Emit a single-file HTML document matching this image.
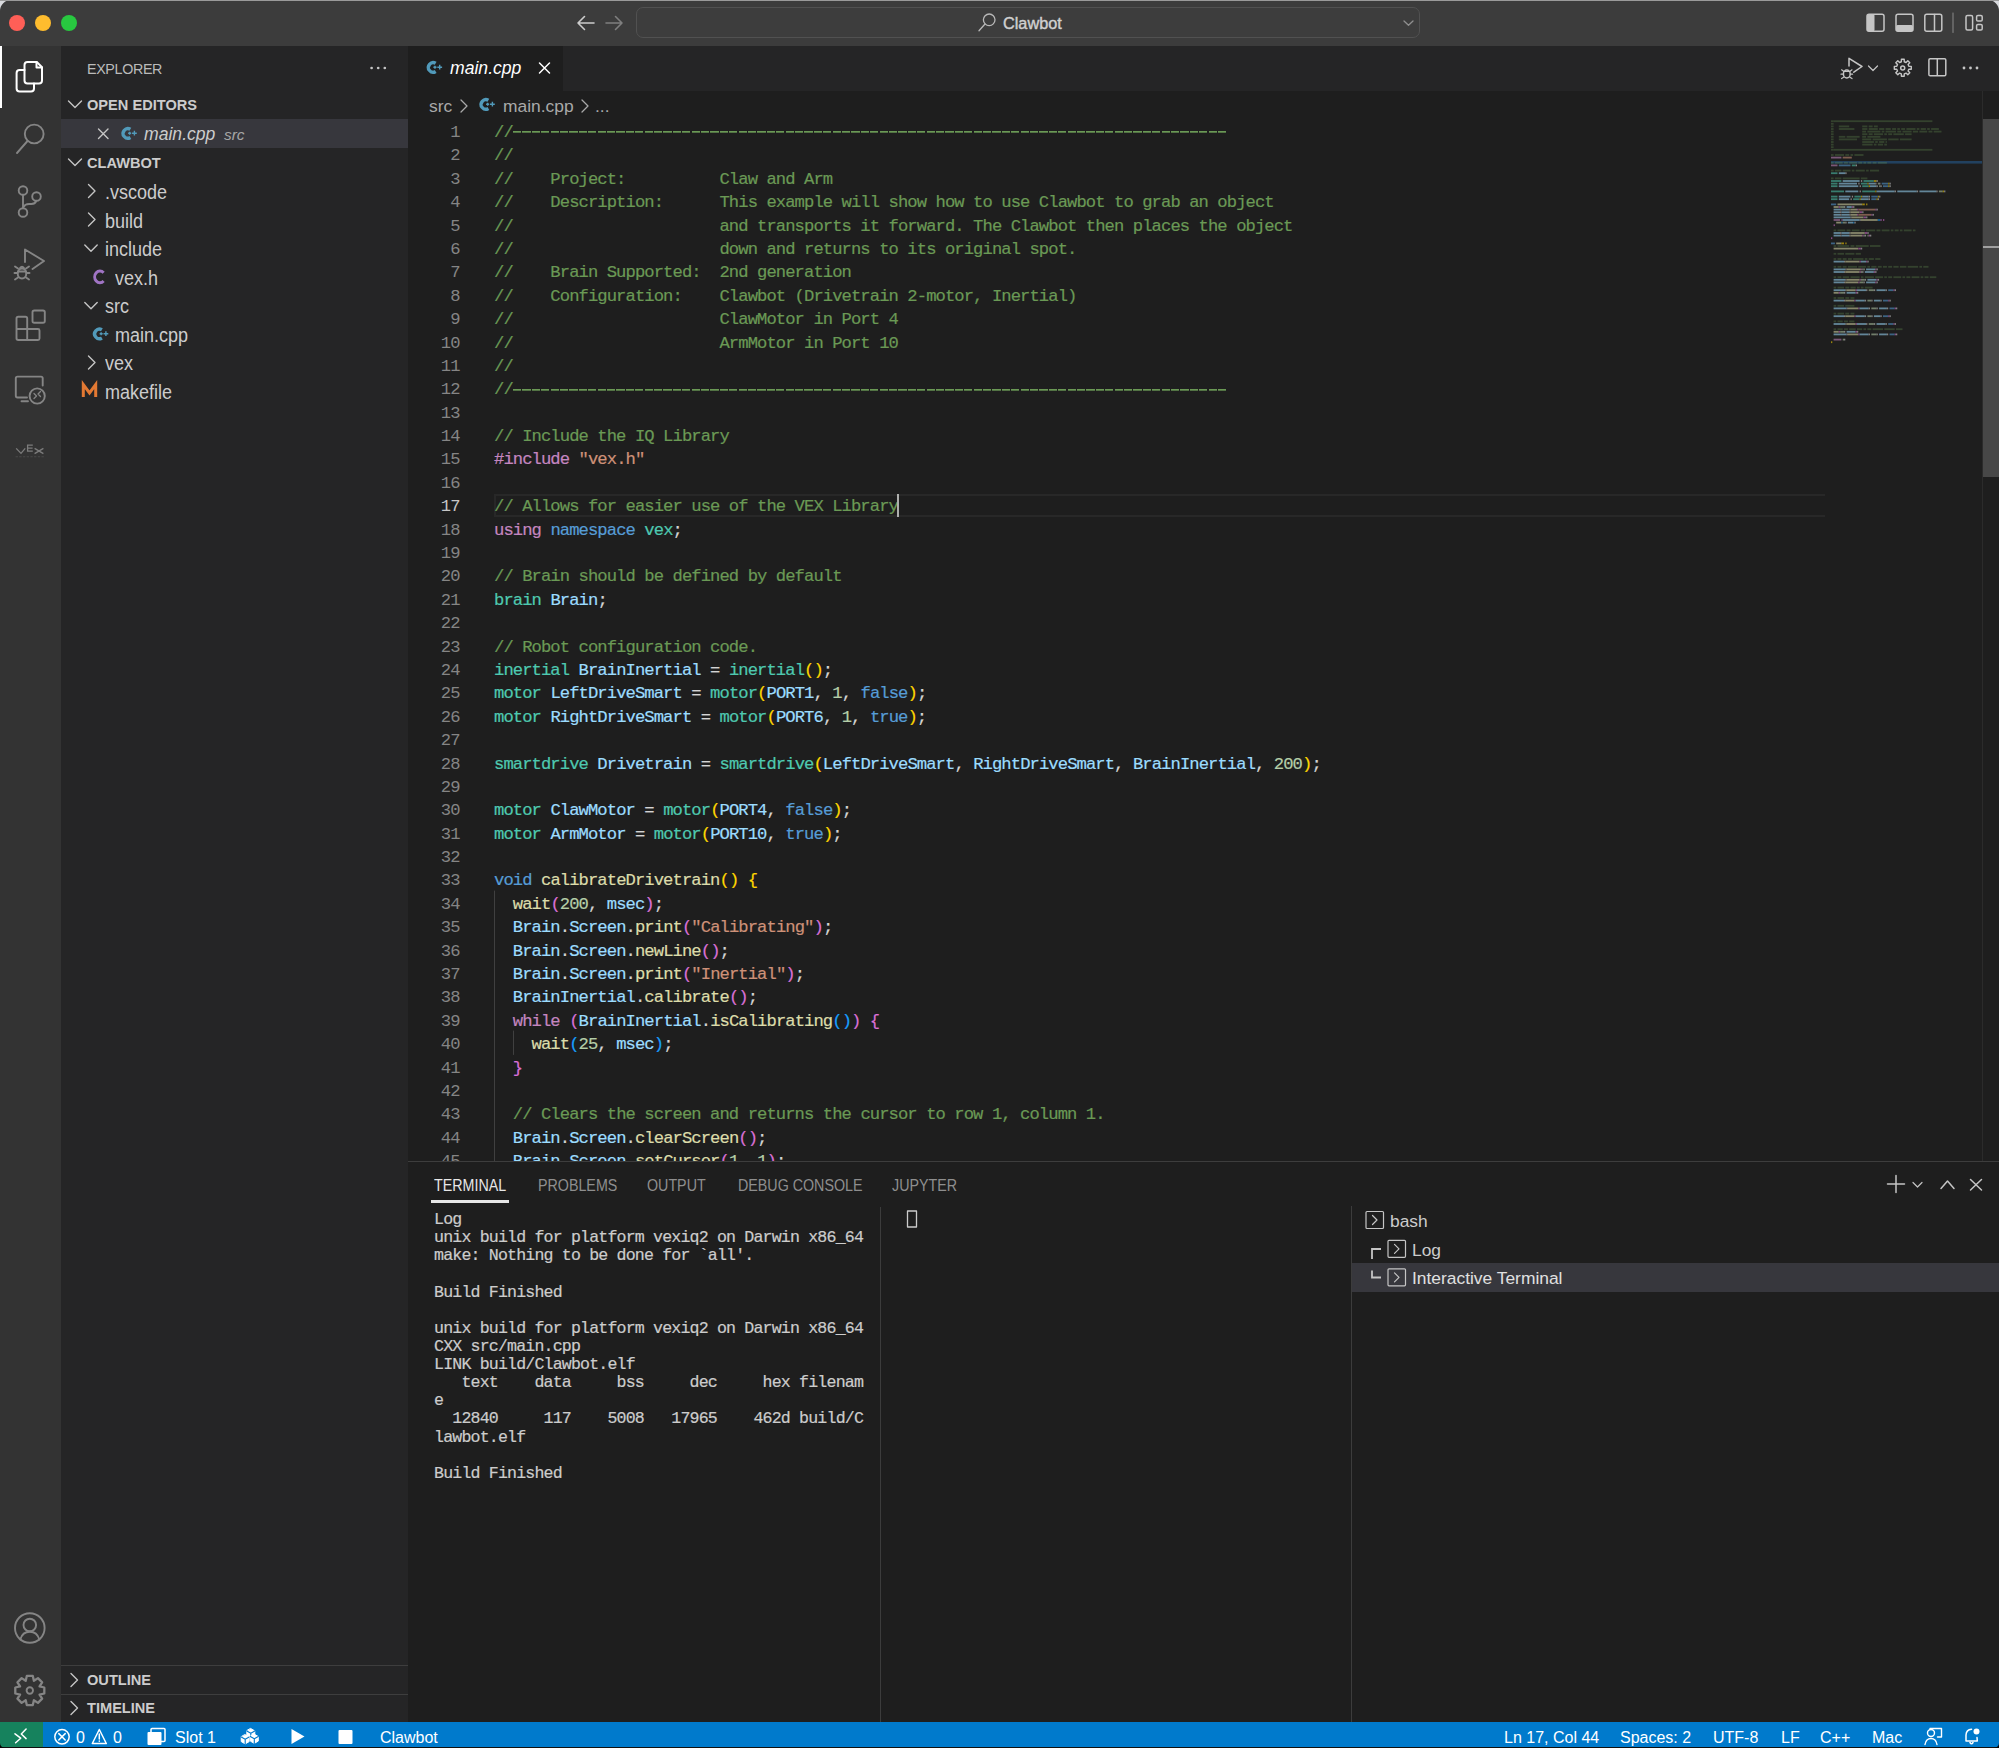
<!DOCTYPE html>
<html><head><meta charset="utf-8"><title>VS Code - Clawbot</title>
<style>
html,body{margin:0;padding:0;}
body{width:1999px;height:1748px;overflow:hidden;background:#1e1e1e;position:relative;font-family:"Liberation Sans",sans-serif;}
.a{position:absolute;}
.title{position:absolute;left:0;top:0;width:1999px;height:46px;background:#3c3c3c;border-top:1px solid #8c8c8c;box-sizing:border-box;}
.tl-dot{position:absolute;width:16px;height:16px;border-radius:50%;top:15px;}
.search{position:absolute;left:636px;top:7px;width:784px;height:31px;border:1.5px solid #515151;border-radius:7px;background:#3d3d3d;box-sizing:border-box;}
.act{position:absolute;left:0;top:46px;width:61px;height:1676px;background:#333333;}
.side{position:absolute;left:61px;top:46px;width:347px;height:1676px;background:#252526;}
.row{position:absolute;height:29px;line-height:29px;font-size:18.2px;color:#cccccc;white-space:pre;}
.hdr{position:absolute;font-size:14.6px;font-weight:bold;color:#cccccc;line-height:29px;white-space:pre;}
.tabs{position:absolute;left:408px;top:46px;width:1591px;height:45px;background:#252526;}
.tab{position:absolute;left:408px;top:46px;width:155px;height:45px;background:#1e1e1e;}
.editor{position:absolute;left:408px;top:91px;width:1574px;height:1070px;overflow:hidden;background:#1e1e1e;}
.ln{position:absolute;left:86px;height:23.39px;line-height:23.39px;font-family:"Liberation Mono",monospace;font-size:17.2px;letter-spacing:-0.92px;white-space:pre;color:#d4d4d4;-webkit-text-stroke:0.2px;}
.num{position:absolute;left:0;width:51.6px;text-align:right;height:23.39px;line-height:23.39px;font-family:"Liberation Mono",monospace;font-size:17.2px;letter-spacing:-0.92px;color:#858585;}
.num.cur{color:#c6c6c6;}
.c{color:#6a9955}.k{color:#c586c0}.s{color:#ce9178}.b{color:#569cd6}.y{color:#4ec9b0}.v{color:#9cdcfe}.f{color:#dcdcaa}.n{color:#b5cea8}.g{color:#ffd700}.p{color:#da70d6}.u{color:#179fff}.t{color:#d4d4d4}
.panel{position:absolute;left:408px;top:1161px;width:1591px;height:561px;background:#1e1e1e;border-top:1px solid #3d3d3d;box-sizing:border-box;}
.ptab{position:absolute;top:1176px;font-size:15.6px;line-height:20px;color:#8e8e8e;white-space:pre;transform:scaleX(0.915);transform-origin:0 0;}
.tl{position:absolute;left:434px;height:18.125px;line-height:18.125px;font-family:"Liberation Mono",monospace;font-size:16.6px;letter-spacing:-0.83px;white-space:pre;color:#cccccc;-webkit-text-stroke:0.2px;}
.status{position:absolute;left:0;top:1722px;width:1999px;height:25px;background:#007acc;}
.st{position:absolute;top:1724.5px;line-height:25px;white-space:pre;color:#ffffff;font-size:16px;}
.fr{font-size:19.6px;transform:scaleX(0.92);transform-origin:0 0;}
.dash{color:transparent;-webkit-text-stroke:0;background:repeating-linear-gradient(90deg,#6a9955 0 8.2px,transparent 8.2px 9.4px) no-repeat;background-size:100% 1.7px;background-position:0 8.4px;}

</style></head><body>
<!-- ===== TITLE BAR ===== -->
<div class="title"></div>
<div class="tl-dot" style="left:9px;background:#ff5f57;"></div>
<div class="tl-dot" style="left:35px;background:#febc2e;"></div>
<div class="tl-dot" style="left:61px;background:#28c840;"></div>
<div class="search"></div>
<div class="a" style="left:1003px;top:12px;font-size:16.3px;line-height:22px;color:#d0d0d0;-webkit-text-stroke:0.4px #d0d0d0;">Clawbot</div>

<!-- ===== ACTIVITY BAR ===== -->
<div class="act"></div>
<div class="a" style="left:0;top:46px;width:2px;height:62px;background:#ffffff;"></div>

<!-- ===== SIDEBAR ===== -->
<div class="side"></div>
<div class="a" style="left:87px;top:56px;font-size:14.3px;letter-spacing:-0.35px;color:#bbbbbb;line-height:26px;">EXPLORER</div>
<div class="hdr" style="left:87px;top:91px;">OPEN EDITORS</div>
<div class="a" style="left:61px;top:119px;width:347px;height:29px;background:#37373d;"></div>
<div class="row" style="left:144px;top:120px;font-style:italic;font-size:17.6px;">main.cpp</div>
<div class="row" style="left:224px;top:120px;font-style:italic;font-size:15.4px;color:#a6a6a6;">src</div>
<div class="hdr" style="left:87px;top:149px;">CLAWBOT</div>
<div class="row fr" style="left:105px;top:178px;">.vscode</div>
<div class="row fr" style="left:105px;top:207px;">build</div>
<div class="row fr" style="left:105px;top:235px;">include</div>
<div class="row fr" style="left:115px;top:264px;">vex.h</div>
<div class="row fr" style="left:105px;top:292px;">src</div>
<div class="row fr" style="left:115px;top:321px;">main.cpp</div>
<div class="row fr" style="left:105px;top:349px;">vex</div>
<div class="row fr" style="left:105px;top:378px;">makefile</div>
<div class="a" style="left:61px;top:1665px;width:347px;height:1px;background:#3e3e3e;"></div>
<div class="hdr" style="left:87px;top:1666px;">OUTLINE</div>
<div class="a" style="left:61px;top:1694px;width:347px;height:1px;background:#3e3e3e;"></div>
<div class="hdr" style="left:87px;top:1694px;">TIMELINE</div>

<!-- ===== EDITOR ===== -->
<div class="tabs"></div>
<div class="tab"></div>
<div class="row" style="left:450px;top:54px;font-style:italic;font-size:17.6px;color:#ffffff;">main.cpp</div>

<div class="editor">
<div class="a" style="left:86px;top:403px;width:1331px;height:23px;border:2.6px solid #282828;border-right:none;box-sizing:border-box;"></div>
<div class="ln" style="top:30.00px"><span class="c">//</span><span class="dash">----------------------------------------------------------------------------</span></div>
<div class="num" style="top:30.00px">1</div>
<div class="ln" style="top:53.39px"><span class="c">//</span></div>
<div class="num" style="top:53.39px">2</div>
<div class="ln" style="top:76.78px"><span class="c">//    Project:          Claw and Arm</span></div>
<div class="num" style="top:76.78px">3</div>
<div class="ln" style="top:100.17px"><span class="c">//    Description:      This example will show how to use Clawbot to grab an object</span></div>
<div class="num" style="top:100.17px">4</div>
<div class="ln" style="top:123.56px"><span class="c">//                      and transports it forward. The Clawbot then places the object</span></div>
<div class="num" style="top:123.56px">5</div>
<div class="ln" style="top:146.95px"><span class="c">//                      down and returns to its original spot.</span></div>
<div class="num" style="top:146.95px">6</div>
<div class="ln" style="top:170.34px"><span class="c">//    Brain Supported:  2nd generation</span></div>
<div class="num" style="top:170.34px">7</div>
<div class="ln" style="top:193.73px"><span class="c">//    Configuration:    Clawbot (Drivetrain 2-motor, Inertial)</span></div>
<div class="num" style="top:193.73px">8</div>
<div class="ln" style="top:217.12px"><span class="c">//                      ClawMotor in Port 4</span></div>
<div class="num" style="top:217.12px">9</div>
<div class="ln" style="top:240.51px"><span class="c">//                      ArmMotor in Port 10</span></div>
<div class="num" style="top:240.51px">10</div>
<div class="ln" style="top:263.90px"><span class="c">//</span></div>
<div class="num" style="top:263.90px">11</div>
<div class="ln" style="top:287.29px"><span class="c">//</span><span class="dash">----------------------------------------------------------------------------</span></div>
<div class="num" style="top:287.29px">12</div>
<div class="ln" style="top:310.68px"></div>
<div class="num" style="top:310.68px">13</div>
<div class="ln" style="top:334.07px"><span class="c">// Include the IQ Library</span></div>
<div class="num" style="top:334.07px">14</div>
<div class="ln" style="top:357.46px"><span class="k">#include</span><span class="t"> </span><span class="s">"vex.h"</span></div>
<div class="num" style="top:357.46px">15</div>
<div class="ln" style="top:380.85px"></div>
<div class="num" style="top:380.85px">16</div>
<div class="ln" style="top:404.24px"><span class="c">// Allows for easier use of the VEX Library</span></div>
<div class="num cur" style="top:404.24px">17</div>
<div class="ln" style="top:427.63px"><span class="k">using</span><span class="t"> </span><span class="b">namespace</span><span class="t"> </span><span class="y">vex</span><span class="t">;</span></div>
<div class="num" style="top:427.63px">18</div>
<div class="ln" style="top:451.02px"></div>
<div class="num" style="top:451.02px">19</div>
<div class="ln" style="top:474.41px"><span class="c">// Brain should be defined by default</span></div>
<div class="num" style="top:474.41px">20</div>
<div class="ln" style="top:497.80px"><span class="y">brain</span><span class="t"> </span><span class="v">Brain</span><span class="t">;</span></div>
<div class="num" style="top:497.80px">21</div>
<div class="ln" style="top:521.19px"></div>
<div class="num" style="top:521.19px">22</div>
<div class="ln" style="top:544.58px"><span class="c">// Robot configuration code.</span></div>
<div class="num" style="top:544.58px">23</div>
<div class="ln" style="top:567.97px"><span class="y">inertial</span><span class="t"> </span><span class="v">BrainInertial</span><span class="t"> = </span><span class="y">inertial</span><span class="g">()</span><span class="t">;</span></div>
<div class="num" style="top:567.97px">24</div>
<div class="ln" style="top:591.36px"><span class="y">motor</span><span class="t"> </span><span class="v">LeftDriveSmart</span><span class="t"> = </span><span class="y">motor</span><span class="g">(</span><span class="v">PORT1</span><span class="t">, </span><span class="n">1</span><span class="t">, </span><span class="b">false</span><span class="g">)</span><span class="t">;</span></div>
<div class="num" style="top:591.36px">25</div>
<div class="ln" style="top:614.75px"><span class="y">motor</span><span class="t"> </span><span class="v">RightDriveSmart</span><span class="t"> = </span><span class="y">motor</span><span class="g">(</span><span class="v">PORT6</span><span class="t">, </span><span class="n">1</span><span class="t">, </span><span class="b">true</span><span class="g">)</span><span class="t">;</span></div>
<div class="num" style="top:614.75px">26</div>
<div class="ln" style="top:638.14px"></div>
<div class="num" style="top:638.14px">27</div>
<div class="ln" style="top:661.53px"><span class="y">smartdrive</span><span class="t"> </span><span class="v">Drivetrain</span><span class="t"> = </span><span class="y">smartdrive</span><span class="g">(</span><span class="v">LeftDriveSmart</span><span class="t">, </span><span class="v">RightDriveSmart</span><span class="t">, </span><span class="v">BrainInertial</span><span class="t">, </span><span class="n">200</span><span class="g">)</span><span class="t">;</span></div>
<div class="num" style="top:661.53px">28</div>
<div class="ln" style="top:684.92px"></div>
<div class="num" style="top:684.92px">29</div>
<div class="ln" style="top:708.31px"><span class="y">motor</span><span class="t"> </span><span class="v">ClawMotor</span><span class="t"> = </span><span class="y">motor</span><span class="g">(</span><span class="v">PORT4</span><span class="t">, </span><span class="b">false</span><span class="g">)</span><span class="t">;</span></div>
<div class="num" style="top:708.31px">30</div>
<div class="ln" style="top:731.70px"><span class="y">motor</span><span class="t"> </span><span class="v">ArmMotor</span><span class="t"> = </span><span class="y">motor</span><span class="g">(</span><span class="v">PORT10</span><span class="t">, </span><span class="b">true</span><span class="g">)</span><span class="t">;</span></div>
<div class="num" style="top:731.70px">31</div>
<div class="ln" style="top:755.09px"></div>
<div class="num" style="top:755.09px">32</div>
<div class="ln" style="top:778.48px"><span class="b">void</span><span class="t"> </span><span class="f">calibrateDrivetrain</span><span class="g">() {</span></div>
<div class="num" style="top:778.48px">33</div>
<div class="ln" style="top:801.87px"><span class="t">  </span><span class="f">wait</span><span class="p">(</span><span class="n">200</span><span class="t">, </span><span class="v">msec</span><span class="p">)</span><span class="t">;</span></div>
<div class="num" style="top:801.87px">34</div>
<div class="ln" style="top:825.26px"><span class="t">  </span><span class="v">Brain</span><span class="t">.</span><span class="v">Screen</span><span class="t">.</span><span class="f">print</span><span class="p">(</span><span class="s">"Calibrating"</span><span class="p">)</span><span class="t">;</span></div>
<div class="num" style="top:825.26px">35</div>
<div class="ln" style="top:848.65px"><span class="t">  </span><span class="v">Brain</span><span class="t">.</span><span class="v">Screen</span><span class="t">.</span><span class="f">newLine</span><span class="p">()</span><span class="t">;</span></div>
<div class="num" style="top:848.65px">36</div>
<div class="ln" style="top:872.04px"><span class="t">  </span><span class="v">Brain</span><span class="t">.</span><span class="v">Screen</span><span class="t">.</span><span class="f">print</span><span class="p">(</span><span class="s">"Inertial"</span><span class="p">)</span><span class="t">;</span></div>
<div class="num" style="top:872.04px">37</div>
<div class="ln" style="top:895.43px"><span class="t">  </span><span class="v">BrainInertial</span><span class="t">.</span><span class="f">calibrate</span><span class="p">()</span><span class="t">;</span></div>
<div class="num" style="top:895.43px">38</div>
<div class="ln" style="top:918.82px"><span class="t">  </span><span class="k">while</span><span class="t"> </span><span class="p">(</span><span class="v">BrainInertial</span><span class="t">.</span><span class="f">isCalibrating</span><span class="u">()</span><span class="p">)</span><span class="t"> </span><span class="p">{</span></div>
<div class="num" style="top:918.82px">39</div>
<div class="ln" style="top:942.21px"><span class="t">    </span><span class="f">wait</span><span class="u">(</span><span class="n">25</span><span class="t">, </span><span class="v">msec</span><span class="u">)</span><span class="t">;</span></div>
<div class="num" style="top:942.21px">40</div>
<div class="ln" style="top:965.60px"><span class="t">  </span><span class="p">}</span></div>
<div class="num" style="top:965.60px">41</div>
<div class="ln" style="top:988.99px"></div>
<div class="num" style="top:988.99px">42</div>
<div class="ln" style="top:1012.38px"><span class="t">  </span><span class="c">// Clears the screen and returns the cursor to row 1, column 1.</span></div>
<div class="num" style="top:1012.38px">43</div>
<div class="ln" style="top:1035.77px"><span class="t">  </span><span class="v">Brain</span><span class="t">.</span><span class="v">Screen</span><span class="t">.</span><span class="f">clearScreen</span><span class="p">()</span><span class="t">;</span></div>
<div class="num" style="top:1035.77px">44</div>
<div class="ln" style="top:1059.16px"><span class="t">  </span><span class="v">Brain</span><span class="t">.</span><span class="v">Screen</span><span class="t">.</span><span class="f">setCursor</span><span class="p">(</span><span class="n">1</span><span class="t">, </span><span class="n">1</span><span class="p">)</span><span class="t">;</span></div>
<div class="num" style="top:1059.16px">45</div>
<div class="a" style="left:489px;top:403px;width:2.4px;height:23px;background:#aeafad;"></div>
</div>
<div class="row" style="left:429px;top:92px;font-size:17.4px;color:#a9a9a9;">src</div>
<div class="row" style="left:503px;top:92px;font-size:17.4px;color:#a9a9a9;">main.cpp</div>
<div class="row" style="left:595px;top:92px;font-size:17.4px;color:#a9a9a9;">...</div>
<svg class="a" style="left:0;top:0;" width="1999" height="1748" viewBox="0 0 1999 1748"><rect x="1831" y="161" width="151" height="2.6" fill="#22415f"/><g opacity="0.55"><rect x="1831.0" y="120.3" width="2.6" height="1.8" fill="#6a9955" fill-opacity="0.55"/><rect x="1833.6" y="120.3" width="98.8" height="1.8" fill="#6a9955" fill-opacity="0.55"/><rect x="1831.0" y="122.9" width="2.6" height="1.8" fill="#6a9955" fill-opacity="0.55"/><rect x="1831.0" y="125.5" width="2.6" height="1.8" fill="#6a9955" fill-opacity="0.55"/><rect x="1838.8" y="125.5" width="10.4" height="1.8" fill="#6a9955" fill-opacity="0.55"/><rect x="1862.2" y="125.5" width="5.2" height="1.8" fill="#6a9955" fill-opacity="0.55"/><rect x="1868.7" y="125.5" width="3.9" height="1.8" fill="#6a9955" fill-opacity="0.55"/><rect x="1873.9" y="125.5" width="3.9" height="1.8" fill="#6a9955" fill-opacity="0.55"/><rect x="1831.0" y="128.1" width="2.6" height="1.8" fill="#6a9955" fill-opacity="0.55"/><rect x="1838.8" y="128.1" width="15.6" height="1.8" fill="#6a9955" fill-opacity="0.55"/><rect x="1862.2" y="128.1" width="5.2" height="1.8" fill="#6a9955" fill-opacity="0.55"/><rect x="1868.7" y="128.1" width="9.1" height="1.8" fill="#6a9955" fill-opacity="0.55"/><rect x="1879.1" y="128.1" width="5.2" height="1.8" fill="#6a9955" fill-opacity="0.55"/><rect x="1885.6" y="128.1" width="5.2" height="1.8" fill="#6a9955" fill-opacity="0.55"/><rect x="1892.1" y="128.1" width="3.9" height="1.8" fill="#6a9955" fill-opacity="0.55"/><rect x="1897.3" y="128.1" width="2.6" height="1.8" fill="#6a9955" fill-opacity="0.55"/><rect x="1901.2" y="128.1" width="3.9" height="1.8" fill="#6a9955" fill-opacity="0.55"/><rect x="1906.4" y="128.1" width="9.1" height="1.8" fill="#6a9955" fill-opacity="0.55"/><rect x="1916.8" y="128.1" width="2.6" height="1.8" fill="#6a9955" fill-opacity="0.55"/><rect x="1920.7" y="128.1" width="5.2" height="1.8" fill="#6a9955" fill-opacity="0.55"/><rect x="1927.2" y="128.1" width="2.6" height="1.8" fill="#6a9955" fill-opacity="0.55"/><rect x="1931.1" y="128.1" width="7.8" height="1.8" fill="#6a9955" fill-opacity="0.55"/><rect x="1831.0" y="130.7" width="2.6" height="1.8" fill="#6a9955" fill-opacity="0.55"/><rect x="1862.2" y="130.7" width="3.9" height="1.8" fill="#6a9955" fill-opacity="0.55"/><rect x="1867.4" y="130.7" width="13.0" height="1.8" fill="#6a9955" fill-opacity="0.55"/><rect x="1881.7" y="130.7" width="2.6" height="1.8" fill="#6a9955" fill-opacity="0.55"/><rect x="1885.6" y="130.7" width="10.4" height="1.8" fill="#6a9955" fill-opacity="0.55"/><rect x="1897.3" y="130.7" width="3.9" height="1.8" fill="#6a9955" fill-opacity="0.55"/><rect x="1902.5" y="130.7" width="9.1" height="1.8" fill="#6a9955" fill-opacity="0.55"/><rect x="1912.9" y="130.7" width="5.2" height="1.8" fill="#6a9955" fill-opacity="0.55"/><rect x="1919.4" y="130.7" width="7.8" height="1.8" fill="#6a9955" fill-opacity="0.55"/><rect x="1928.5" y="130.7" width="3.9" height="1.8" fill="#6a9955" fill-opacity="0.55"/><rect x="1933.7" y="130.7" width="7.8" height="1.8" fill="#6a9955" fill-opacity="0.55"/><rect x="1831.0" y="133.3" width="2.6" height="1.8" fill="#6a9955" fill-opacity="0.55"/><rect x="1862.2" y="133.3" width="5.2" height="1.8" fill="#6a9955" fill-opacity="0.55"/><rect x="1868.7" y="133.3" width="3.9" height="1.8" fill="#6a9955" fill-opacity="0.55"/><rect x="1873.9" y="133.3" width="9.1" height="1.8" fill="#6a9955" fill-opacity="0.55"/><rect x="1884.3" y="133.3" width="2.6" height="1.8" fill="#6a9955" fill-opacity="0.55"/><rect x="1888.2" y="133.3" width="3.9" height="1.8" fill="#6a9955" fill-opacity="0.55"/><rect x="1893.4" y="133.3" width="10.4" height="1.8" fill="#6a9955" fill-opacity="0.55"/><rect x="1905.1" y="133.3" width="6.5" height="1.8" fill="#6a9955" fill-opacity="0.55"/><rect x="1831.0" y="135.9" width="2.6" height="1.8" fill="#6a9955" fill-opacity="0.55"/><rect x="1838.8" y="135.9" width="6.5" height="1.8" fill="#6a9955" fill-opacity="0.55"/><rect x="1846.6" y="135.9" width="13.0" height="1.8" fill="#6a9955" fill-opacity="0.55"/><rect x="1862.2" y="135.9" width="3.9" height="1.8" fill="#6a9955" fill-opacity="0.55"/><rect x="1867.4" y="135.9" width="13.0" height="1.8" fill="#6a9955" fill-opacity="0.55"/><rect x="1831.0" y="138.5" width="2.6" height="1.8" fill="#6a9955" fill-opacity="0.55"/><rect x="1838.8" y="138.5" width="18.2" height="1.8" fill="#6a9955" fill-opacity="0.55"/><rect x="1862.2" y="138.5" width="9.1" height="1.8" fill="#6a9955" fill-opacity="0.55"/><rect x="1872.6" y="138.5" width="14.3" height="1.8" fill="#6a9955" fill-opacity="0.55"/><rect x="1888.2" y="138.5" width="10.4" height="1.8" fill="#6a9955" fill-opacity="0.55"/><rect x="1899.9" y="138.5" width="11.7" height="1.8" fill="#6a9955" fill-opacity="0.55"/><rect x="1831.0" y="141.1" width="2.6" height="1.8" fill="#6a9955" fill-opacity="0.55"/><rect x="1862.2" y="141.1" width="11.7" height="1.8" fill="#6a9955" fill-opacity="0.55"/><rect x="1875.2" y="141.1" width="2.6" height="1.8" fill="#6a9955" fill-opacity="0.55"/><rect x="1879.1" y="141.1" width="5.2" height="1.8" fill="#6a9955" fill-opacity="0.55"/><rect x="1885.6" y="141.1" width="1.3" height="1.8" fill="#6a9955" fill-opacity="0.55"/><rect x="1831.0" y="143.7" width="2.6" height="1.8" fill="#6a9955" fill-opacity="0.55"/><rect x="1862.2" y="143.7" width="10.4" height="1.8" fill="#6a9955" fill-opacity="0.55"/><rect x="1873.9" y="143.7" width="2.6" height="1.8" fill="#6a9955" fill-opacity="0.55"/><rect x="1877.8" y="143.7" width="5.2" height="1.8" fill="#6a9955" fill-opacity="0.55"/><rect x="1884.3" y="143.7" width="2.6" height="1.8" fill="#6a9955" fill-opacity="0.55"/><rect x="1831.0" y="146.3" width="2.6" height="1.8" fill="#6a9955" fill-opacity="0.55"/><rect x="1831.0" y="148.9" width="2.6" height="1.8" fill="#6a9955" fill-opacity="0.55"/><rect x="1833.6" y="148.9" width="98.8" height="1.8" fill="#6a9955" fill-opacity="0.55"/><rect x="1831.0" y="154.1" width="2.6" height="1.8" fill="#6a9955" fill-opacity="0.55"/><rect x="1834.9" y="154.1" width="9.1" height="1.8" fill="#6a9955" fill-opacity="0.55"/><rect x="1845.3" y="154.1" width="3.9" height="1.8" fill="#6a9955" fill-opacity="0.55"/><rect x="1850.5" y="154.1" width="2.6" height="1.8" fill="#6a9955" fill-opacity="0.55"/><rect x="1854.4" y="154.1" width="9.1" height="1.8" fill="#6a9955" fill-opacity="0.55"/><rect x="1831.0" y="156.7" width="10.4" height="1.8" fill="#c586c0"/><rect x="1842.7" y="156.7" width="9.1" height="1.8" fill="#ce9178"/><rect x="1831.0" y="161.9" width="2.6" height="1.8" fill="#6a9955" fill-opacity="0.55"/><rect x="1834.9" y="161.9" width="7.8" height="1.8" fill="#6a9955" fill-opacity="0.55"/><rect x="1844.0" y="161.9" width="3.9" height="1.8" fill="#6a9955" fill-opacity="0.55"/><rect x="1849.2" y="161.9" width="7.8" height="1.8" fill="#6a9955" fill-opacity="0.55"/><rect x="1858.3" y="161.9" width="3.9" height="1.8" fill="#6a9955" fill-opacity="0.55"/><rect x="1863.5" y="161.9" width="2.6" height="1.8" fill="#6a9955" fill-opacity="0.55"/><rect x="1867.4" y="161.9" width="3.9" height="1.8" fill="#6a9955" fill-opacity="0.55"/><rect x="1872.6" y="161.9" width="3.9" height="1.8" fill="#6a9955" fill-opacity="0.55"/><rect x="1877.8" y="161.9" width="9.1" height="1.8" fill="#6a9955" fill-opacity="0.55"/><rect x="1831.0" y="164.5" width="6.5" height="1.8" fill="#c586c0"/><rect x="1838.8" y="164.5" width="11.7" height="1.8" fill="#569cd6"/><rect x="1851.8" y="164.5" width="3.9" height="1.8" fill="#4ec9b0"/><rect x="1855.7" y="164.5" width="1.3" height="1.8" fill="#d4d4d4"/><rect x="1831.0" y="169.7" width="2.6" height="1.8" fill="#6a9955" fill-opacity="0.55"/><rect x="1834.9" y="169.7" width="6.5" height="1.8" fill="#6a9955" fill-opacity="0.55"/><rect x="1842.7" y="169.7" width="7.8" height="1.8" fill="#6a9955" fill-opacity="0.55"/><rect x="1851.8" y="169.7" width="2.6" height="1.8" fill="#6a9955" fill-opacity="0.55"/><rect x="1855.7" y="169.7" width="9.1" height="1.8" fill="#6a9955" fill-opacity="0.55"/><rect x="1866.1" y="169.7" width="2.6" height="1.8" fill="#6a9955" fill-opacity="0.55"/><rect x="1870.0" y="169.7" width="9.1" height="1.8" fill="#6a9955" fill-opacity="0.55"/><rect x="1831.0" y="172.3" width="6.5" height="1.8" fill="#4ec9b0"/><rect x="1838.8" y="172.3" width="6.5" height="1.8" fill="#9cdcfe"/><rect x="1845.3" y="172.3" width="1.3" height="1.8" fill="#d4d4d4"/><rect x="1831.0" y="177.5" width="2.6" height="1.8" fill="#6a9955" fill-opacity="0.55"/><rect x="1834.9" y="177.5" width="6.5" height="1.8" fill="#6a9955" fill-opacity="0.55"/><rect x="1842.7" y="177.5" width="16.9" height="1.8" fill="#6a9955" fill-opacity="0.55"/><rect x="1860.9" y="177.5" width="6.5" height="1.8" fill="#6a9955" fill-opacity="0.55"/><rect x="1831.0" y="180.1" width="10.4" height="1.8" fill="#4ec9b0"/><rect x="1842.7" y="180.1" width="16.9" height="1.8" fill="#9cdcfe"/><rect x="1860.9" y="180.1" width="1.3" height="1.8" fill="#d4d4d4"/><rect x="1863.5" y="180.1" width="10.4" height="1.8" fill="#4ec9b0"/><rect x="1873.9" y="180.1" width="2.6" height="1.8" fill="#ffd700"/><rect x="1876.5" y="180.1" width="1.3" height="1.8" fill="#d4d4d4"/><rect x="1831.0" y="182.7" width="6.5" height="1.8" fill="#4ec9b0"/><rect x="1838.8" y="182.7" width="18.2" height="1.8" fill="#9cdcfe"/><rect x="1858.3" y="182.7" width="1.3" height="1.8" fill="#d4d4d4"/><rect x="1860.9" y="182.7" width="6.5" height="1.8" fill="#4ec9b0"/><rect x="1867.4" y="182.7" width="1.3" height="1.8" fill="#ffd700"/><rect x="1868.7" y="182.7" width="6.5" height="1.8" fill="#9cdcfe"/><rect x="1875.2" y="182.7" width="1.3" height="1.8" fill="#d4d4d4"/><rect x="1877.8" y="182.7" width="1.3" height="1.8" fill="#b5cea8"/><rect x="1879.1" y="182.7" width="1.3" height="1.8" fill="#d4d4d4"/><rect x="1881.7" y="182.7" width="6.5" height="1.8" fill="#569cd6"/><rect x="1888.2" y="182.7" width="1.3" height="1.8" fill="#ffd700"/><rect x="1889.5" y="182.7" width="1.3" height="1.8" fill="#d4d4d4"/><rect x="1831.0" y="185.3" width="6.5" height="1.8" fill="#4ec9b0"/><rect x="1838.8" y="185.3" width="19.5" height="1.8" fill="#9cdcfe"/><rect x="1859.6" y="185.3" width="1.3" height="1.8" fill="#d4d4d4"/><rect x="1862.2" y="185.3" width="6.5" height="1.8" fill="#4ec9b0"/><rect x="1868.7" y="185.3" width="1.3" height="1.8" fill="#ffd700"/><rect x="1870.0" y="185.3" width="6.5" height="1.8" fill="#9cdcfe"/><rect x="1876.5" y="185.3" width="1.3" height="1.8" fill="#d4d4d4"/><rect x="1879.1" y="185.3" width="1.3" height="1.8" fill="#b5cea8"/><rect x="1880.4" y="185.3" width="1.3" height="1.8" fill="#d4d4d4"/><rect x="1883.0" y="185.3" width="5.2" height="1.8" fill="#569cd6"/><rect x="1888.2" y="185.3" width="1.3" height="1.8" fill="#ffd700"/><rect x="1889.5" y="185.3" width="1.3" height="1.8" fill="#d4d4d4"/><rect x="1831.0" y="190.5" width="13.0" height="1.8" fill="#4ec9b0"/><rect x="1845.3" y="190.5" width="13.0" height="1.8" fill="#9cdcfe"/><rect x="1859.6" y="190.5" width="1.3" height="1.8" fill="#d4d4d4"/><rect x="1862.2" y="190.5" width="13.0" height="1.8" fill="#4ec9b0"/><rect x="1875.2" y="190.5" width="1.3" height="1.8" fill="#ffd700"/><rect x="1876.5" y="190.5" width="18.2" height="1.8" fill="#9cdcfe"/><rect x="1894.7" y="190.5" width="1.3" height="1.8" fill="#d4d4d4"/><rect x="1897.3" y="190.5" width="19.5" height="1.8" fill="#9cdcfe"/><rect x="1916.8" y="190.5" width="1.3" height="1.8" fill="#d4d4d4"/><rect x="1919.4" y="190.5" width="16.9" height="1.8" fill="#9cdcfe"/><rect x="1936.3" y="190.5" width="1.3" height="1.8" fill="#d4d4d4"/><rect x="1938.9" y="190.5" width="3.9" height="1.8" fill="#b5cea8"/><rect x="1942.8" y="190.5" width="1.3" height="1.8" fill="#ffd700"/><rect x="1944.1" y="190.5" width="1.3" height="1.8" fill="#d4d4d4"/><rect x="1831.0" y="195.7" width="6.5" height="1.8" fill="#4ec9b0"/><rect x="1838.8" y="195.7" width="11.7" height="1.8" fill="#9cdcfe"/><rect x="1851.8" y="195.7" width="1.3" height="1.8" fill="#d4d4d4"/><rect x="1854.4" y="195.7" width="6.5" height="1.8" fill="#4ec9b0"/><rect x="1860.9" y="195.7" width="1.3" height="1.8" fill="#ffd700"/><rect x="1862.2" y="195.7" width="6.5" height="1.8" fill="#9cdcfe"/><rect x="1868.7" y="195.7" width="1.3" height="1.8" fill="#d4d4d4"/><rect x="1871.3" y="195.7" width="6.5" height="1.8" fill="#569cd6"/><rect x="1877.8" y="195.7" width="1.3" height="1.8" fill="#ffd700"/><rect x="1879.1" y="195.7" width="1.3" height="1.8" fill="#d4d4d4"/><rect x="1831.0" y="198.3" width="6.5" height="1.8" fill="#4ec9b0"/><rect x="1838.8" y="198.3" width="10.4" height="1.8" fill="#9cdcfe"/><rect x="1850.5" y="198.3" width="1.3" height="1.8" fill="#d4d4d4"/><rect x="1853.1" y="198.3" width="6.5" height="1.8" fill="#4ec9b0"/><rect x="1859.6" y="198.3" width="1.3" height="1.8" fill="#ffd700"/><rect x="1860.9" y="198.3" width="7.8" height="1.8" fill="#9cdcfe"/><rect x="1868.7" y="198.3" width="1.3" height="1.8" fill="#d4d4d4"/><rect x="1871.3" y="198.3" width="5.2" height="1.8" fill="#569cd6"/><rect x="1876.5" y="198.3" width="1.3" height="1.8" fill="#ffd700"/><rect x="1877.8" y="198.3" width="1.3" height="1.8" fill="#d4d4d4"/><rect x="1831.0" y="203.5" width="5.2" height="1.8" fill="#569cd6"/><rect x="1837.5" y="203.5" width="24.7" height="1.8" fill="#dcdcaa"/><rect x="1862.2" y="203.5" width="2.6" height="1.8" fill="#ffd700"/><rect x="1866.1" y="203.5" width="1.3" height="1.8" fill="#ffd700"/><rect x="1833.6" y="206.1" width="5.2" height="1.8" fill="#dcdcaa"/><rect x="1838.8" y="206.1" width="1.3" height="1.8" fill="#da70d6"/><rect x="1840.1" y="206.1" width="3.9" height="1.8" fill="#b5cea8"/><rect x="1844.0" y="206.1" width="1.3" height="1.8" fill="#d4d4d4"/><rect x="1846.6" y="206.1" width="5.2" height="1.8" fill="#9cdcfe"/><rect x="1851.8" y="206.1" width="1.3" height="1.8" fill="#da70d6"/><rect x="1853.1" y="206.1" width="1.3" height="1.8" fill="#d4d4d4"/><rect x="1833.6" y="208.7" width="6.5" height="1.8" fill="#9cdcfe"/><rect x="1840.1" y="208.7" width="1.3" height="1.8" fill="#d4d4d4"/><rect x="1841.4" y="208.7" width="7.8" height="1.8" fill="#9cdcfe"/><rect x="1849.2" y="208.7" width="1.3" height="1.8" fill="#d4d4d4"/><rect x="1850.5" y="208.7" width="6.5" height="1.8" fill="#dcdcaa"/><rect x="1857.0" y="208.7" width="1.3" height="1.8" fill="#da70d6"/><rect x="1858.3" y="208.7" width="16.9" height="1.8" fill="#ce9178"/><rect x="1875.2" y="208.7" width="1.3" height="1.8" fill="#da70d6"/><rect x="1876.5" y="208.7" width="1.3" height="1.8" fill="#d4d4d4"/><rect x="1833.6" y="211.3" width="6.5" height="1.8" fill="#9cdcfe"/><rect x="1840.1" y="211.3" width="1.3" height="1.8" fill="#d4d4d4"/><rect x="1841.4" y="211.3" width="7.8" height="1.8" fill="#9cdcfe"/><rect x="1849.2" y="211.3" width="1.3" height="1.8" fill="#d4d4d4"/><rect x="1850.5" y="211.3" width="9.1" height="1.8" fill="#dcdcaa"/><rect x="1859.6" y="211.3" width="2.6" height="1.8" fill="#da70d6"/><rect x="1862.2" y="211.3" width="1.3" height="1.8" fill="#d4d4d4"/><rect x="1833.6" y="213.9" width="6.5" height="1.8" fill="#9cdcfe"/><rect x="1840.1" y="213.9" width="1.3" height="1.8" fill="#d4d4d4"/><rect x="1841.4" y="213.9" width="7.8" height="1.8" fill="#9cdcfe"/><rect x="1849.2" y="213.9" width="1.3" height="1.8" fill="#d4d4d4"/><rect x="1850.5" y="213.9" width="6.5" height="1.8" fill="#dcdcaa"/><rect x="1857.0" y="213.9" width="1.3" height="1.8" fill="#da70d6"/><rect x="1858.3" y="213.9" width="13.0" height="1.8" fill="#ce9178"/><rect x="1871.3" y="213.9" width="1.3" height="1.8" fill="#da70d6"/><rect x="1872.6" y="213.9" width="1.3" height="1.8" fill="#d4d4d4"/><rect x="1833.6" y="216.5" width="16.9" height="1.8" fill="#9cdcfe"/><rect x="1850.5" y="216.5" width="1.3" height="1.8" fill="#d4d4d4"/><rect x="1851.8" y="216.5" width="11.7" height="1.8" fill="#dcdcaa"/><rect x="1863.5" y="216.5" width="2.6" height="1.8" fill="#da70d6"/><rect x="1866.1" y="216.5" width="1.3" height="1.8" fill="#d4d4d4"/><rect x="1833.6" y="219.1" width="6.5" height="1.8" fill="#c586c0"/><rect x="1841.4" y="219.1" width="1.3" height="1.8" fill="#da70d6"/><rect x="1842.7" y="219.1" width="16.9" height="1.8" fill="#9cdcfe"/><rect x="1859.6" y="219.1" width="1.3" height="1.8" fill="#d4d4d4"/><rect x="1860.9" y="219.1" width="16.9" height="1.8" fill="#dcdcaa"/><rect x="1877.8" y="219.1" width="2.6" height="1.8" fill="#179fff"/><rect x="1880.4" y="219.1" width="1.3" height="1.8" fill="#da70d6"/><rect x="1883.0" y="219.1" width="1.3" height="1.8" fill="#da70d6"/><rect x="1836.2" y="221.7" width="5.2" height="1.8" fill="#dcdcaa"/><rect x="1841.4" y="221.7" width="1.3" height="1.8" fill="#179fff"/><rect x="1842.7" y="221.7" width="2.6" height="1.8" fill="#b5cea8"/><rect x="1845.3" y="221.7" width="1.3" height="1.8" fill="#d4d4d4"/><rect x="1847.9" y="221.7" width="5.2" height="1.8" fill="#9cdcfe"/><rect x="1853.1" y="221.7" width="1.3" height="1.8" fill="#179fff"/><rect x="1854.4" y="221.7" width="1.3" height="1.8" fill="#d4d4d4"/><rect x="1833.6" y="224.3" width="1.3" height="1.8" fill="#da70d6"/><rect x="1833.6" y="229.5" width="2.6" height="1.8" fill="#6a9955" fill-opacity="0.55"/><rect x="1837.5" y="229.5" width="7.8" height="1.8" fill="#6a9955" fill-opacity="0.55"/><rect x="1846.6" y="229.5" width="3.9" height="1.8" fill="#6a9955" fill-opacity="0.55"/><rect x="1851.8" y="229.5" width="7.8" height="1.8" fill="#6a9955" fill-opacity="0.55"/><rect x="1860.9" y="229.5" width="3.9" height="1.8" fill="#6a9955" fill-opacity="0.55"/><rect x="1866.1" y="229.5" width="9.1" height="1.8" fill="#6a9955" fill-opacity="0.55"/><rect x="1876.5" y="229.5" width="3.9" height="1.8" fill="#6a9955" fill-opacity="0.55"/><rect x="1881.7" y="229.5" width="7.8" height="1.8" fill="#6a9955" fill-opacity="0.55"/><rect x="1890.8" y="229.5" width="2.6" height="1.8" fill="#6a9955" fill-opacity="0.55"/><rect x="1894.7" y="229.5" width="3.9" height="1.8" fill="#6a9955" fill-opacity="0.55"/><rect x="1899.9" y="229.5" width="2.6" height="1.8" fill="#6a9955" fill-opacity="0.55"/><rect x="1903.8" y="229.5" width="7.8" height="1.8" fill="#6a9955" fill-opacity="0.55"/><rect x="1912.9" y="229.5" width="2.6" height="1.8" fill="#6a9955" fill-opacity="0.55"/><rect x="1833.6" y="232.1" width="6.5" height="1.8" fill="#9cdcfe"/><rect x="1840.1" y="232.1" width="1.3" height="1.8" fill="#d4d4d4"/><rect x="1841.4" y="232.1" width="7.8" height="1.8" fill="#9cdcfe"/><rect x="1849.2" y="232.1" width="1.3" height="1.8" fill="#d4d4d4"/><rect x="1850.5" y="232.1" width="14.3" height="1.8" fill="#dcdcaa"/><rect x="1864.8" y="232.1" width="2.6" height="1.8" fill="#da70d6"/><rect x="1867.4" y="232.1" width="1.3" height="1.8" fill="#d4d4d4"/><rect x="1833.6" y="234.7" width="6.5" height="1.8" fill="#9cdcfe"/><rect x="1840.1" y="234.7" width="1.3" height="1.8" fill="#d4d4d4"/><rect x="1841.4" y="234.7" width="7.8" height="1.8" fill="#9cdcfe"/><rect x="1849.2" y="234.7" width="1.3" height="1.8" fill="#d4d4d4"/><rect x="1850.5" y="234.7" width="11.7" height="1.8" fill="#dcdcaa"/><rect x="1862.2" y="234.7" width="1.3" height="1.8" fill="#da70d6"/><rect x="1863.5" y="234.7" width="1.3" height="1.8" fill="#b5cea8"/><rect x="1864.8" y="234.7" width="1.3" height="1.8" fill="#d4d4d4"/><rect x="1867.4" y="234.7" width="1.3" height="1.8" fill="#b5cea8"/><rect x="1868.7" y="234.7" width="1.3" height="1.8" fill="#da70d6"/><rect x="1870.0" y="234.7" width="1.3" height="1.8" fill="#d4d4d4"/><rect x="1831.0" y="237.3" width="1.3" height="1.8" fill="#da70d6"/><rect x="1831.0" y="242.5" width="3.9" height="1.8" fill="#569cd6"/><rect x="1836.2" y="242.5" width="5.2" height="1.8" fill="#dcdcaa"/><rect x="1841.4" y="242.5" width="2.6" height="1.8" fill="#ffd700"/><rect x="1845.3" y="242.5" width="1.3" height="1.8" fill="#ffd700"/><rect x="1833.6" y="245.1" width="2.6" height="1.8" fill="#6a9955" fill-opacity="0.55"/><rect x="1837.5" y="245.1" width="11.7" height="1.8" fill="#6a9955" fill-opacity="0.55"/><rect x="1850.5" y="245.1" width="3.9" height="1.8" fill="#6a9955" fill-opacity="0.55"/><rect x="1855.7" y="245.1" width="13.0" height="1.8" fill="#6a9955" fill-opacity="0.55"/><rect x="1870.0" y="245.1" width="10.4" height="1.8" fill="#6a9955" fill-opacity="0.55"/><rect x="1833.6" y="247.7" width="24.7" height="1.8" fill="#dcdcaa"/><rect x="1858.3" y="247.7" width="2.6" height="1.8" fill="#da70d6"/><rect x="1860.9" y="247.7" width="1.3" height="1.8" fill="#d4d4d4"/><rect x="1833.6" y="252.9" width="2.6" height="1.8" fill="#6a9955" fill-opacity="0.55"/><rect x="1837.5" y="252.9" width="6.5" height="1.8" fill="#6a9955" fill-opacity="0.55"/><rect x="1845.3" y="252.9" width="9.1" height="1.8" fill="#6a9955" fill-opacity="0.55"/><rect x="1855.7" y="252.9" width="5.2" height="1.8" fill="#6a9955" fill-opacity="0.55"/><rect x="1833.6" y="258.1" width="2.6" height="1.8" fill="#6a9955" fill-opacity="0.55"/><rect x="1837.5" y="258.1" width="3.9" height="1.8" fill="#6a9955" fill-opacity="0.55"/><rect x="1842.7" y="258.1" width="3.9" height="1.8" fill="#6a9955" fill-opacity="0.55"/><rect x="1847.9" y="258.1" width="3.9" height="1.8" fill="#6a9955" fill-opacity="0.55"/><rect x="1853.1" y="258.1" width="10.4" height="1.8" fill="#6a9955" fill-opacity="0.55"/><rect x="1864.8" y="258.1" width="2.6" height="1.8" fill="#6a9955" fill-opacity="0.55"/><rect x="1868.7" y="258.1" width="5.2" height="1.8" fill="#6a9955" fill-opacity="0.55"/><rect x="1875.2" y="258.1" width="5.2" height="1.8" fill="#6a9955" fill-opacity="0.55"/><rect x="1833.6" y="260.7" width="10.4" height="1.8" fill="#9cdcfe"/><rect x="1844.0" y="260.7" width="1.3" height="1.8" fill="#d4d4d4"/><rect x="1845.3" y="260.7" width="14.3" height="1.8" fill="#dcdcaa"/><rect x="1859.6" y="260.7" width="1.3" height="1.8" fill="#da70d6"/><rect x="1860.9" y="260.7" width="5.2" height="1.8" fill="#9cdcfe"/><rect x="1866.1" y="260.7" width="1.3" height="1.8" fill="#da70d6"/><rect x="1867.4" y="260.7" width="1.3" height="1.8" fill="#d4d4d4"/><rect x="1833.6" y="265.9" width="2.6" height="1.8" fill="#6a9955" fill-opacity="0.55"/><rect x="1837.5" y="265.9" width="3.9" height="1.8" fill="#6a9955" fill-opacity="0.55"/><rect x="1842.7" y="265.9" width="3.9" height="1.8" fill="#6a9955" fill-opacity="0.55"/><rect x="1847.9" y="265.9" width="9.1" height="1.8" fill="#6a9955" fill-opacity="0.55"/><rect x="1858.3" y="265.9" width="7.8" height="1.8" fill="#6a9955" fill-opacity="0.55"/><rect x="1867.4" y="265.9" width="2.6" height="1.8" fill="#6a9955" fill-opacity="0.55"/><rect x="1871.3" y="265.9" width="5.2" height="1.8" fill="#6a9955" fill-opacity="0.55"/><rect x="1877.8" y="265.9" width="3.9" height="1.8" fill="#6a9955" fill-opacity="0.55"/><rect x="1883.0" y="265.9" width="3.9" height="1.8" fill="#6a9955" fill-opacity="0.55"/><rect x="1888.2" y="265.9" width="3.9" height="1.8" fill="#6a9955" fill-opacity="0.55"/><rect x="1893.4" y="265.9" width="5.2" height="1.8" fill="#6a9955" fill-opacity="0.55"/><rect x="1899.9" y="265.9" width="6.5" height="1.8" fill="#6a9955" fill-opacity="0.55"/><rect x="1907.7" y="265.9" width="10.4" height="1.8" fill="#6a9955" fill-opacity="0.55"/><rect x="1919.4" y="265.9" width="2.6" height="1.8" fill="#6a9955" fill-opacity="0.55"/><rect x="1923.3" y="265.9" width="5.2" height="1.8" fill="#6a9955" fill-opacity="0.55"/><rect x="1833.6" y="268.5" width="11.7" height="1.8" fill="#9cdcfe"/><rect x="1845.3" y="268.5" width="1.3" height="1.8" fill="#d4d4d4"/><rect x="1846.6" y="268.5" width="14.3" height="1.8" fill="#dcdcaa"/><rect x="1860.9" y="268.5" width="1.3" height="1.8" fill="#da70d6"/><rect x="1862.2" y="268.5" width="1.3" height="1.8" fill="#b5cea8"/><rect x="1863.5" y="268.5" width="1.3" height="1.8" fill="#d4d4d4"/><rect x="1866.1" y="268.5" width="9.1" height="1.8" fill="#9cdcfe"/><rect x="1875.2" y="268.5" width="1.3" height="1.8" fill="#da70d6"/><rect x="1876.5" y="268.5" width="1.3" height="1.8" fill="#d4d4d4"/><rect x="1833.6" y="271.1" width="10.4" height="1.8" fill="#9cdcfe"/><rect x="1844.0" y="271.1" width="1.3" height="1.8" fill="#d4d4d4"/><rect x="1845.3" y="271.1" width="14.3" height="1.8" fill="#dcdcaa"/><rect x="1859.6" y="271.1" width="1.3" height="1.8" fill="#da70d6"/><rect x="1860.9" y="271.1" width="1.3" height="1.8" fill="#b5cea8"/><rect x="1862.2" y="271.1" width="1.3" height="1.8" fill="#d4d4d4"/><rect x="1864.8" y="271.1" width="9.1" height="1.8" fill="#9cdcfe"/><rect x="1873.9" y="271.1" width="1.3" height="1.8" fill="#da70d6"/><rect x="1875.2" y="271.1" width="1.3" height="1.8" fill="#d4d4d4"/><rect x="1833.6" y="276.3" width="2.6" height="1.8" fill="#6a9955" fill-opacity="0.55"/><rect x="1837.5" y="276.3" width="3.9" height="1.8" fill="#6a9955" fill-opacity="0.55"/><rect x="1842.7" y="276.3" width="6.5" height="1.8" fill="#6a9955" fill-opacity="0.55"/><rect x="1850.5" y="276.3" width="9.1" height="1.8" fill="#6a9955" fill-opacity="0.55"/><rect x="1860.9" y="276.3" width="2.6" height="1.8" fill="#6a9955" fill-opacity="0.55"/><rect x="1864.8" y="276.3" width="9.1" height="1.8" fill="#6a9955" fill-opacity="0.55"/><rect x="1875.2" y="276.3" width="7.8" height="1.8" fill="#6a9955" fill-opacity="0.55"/><rect x="1884.3" y="276.3" width="2.6" height="1.8" fill="#6a9955" fill-opacity="0.55"/><rect x="1888.2" y="276.3" width="3.9" height="1.8" fill="#6a9955" fill-opacity="0.55"/><rect x="1893.4" y="276.3" width="7.8" height="1.8" fill="#6a9955" fill-opacity="0.55"/><rect x="1902.5" y="276.3" width="2.6" height="1.8" fill="#6a9955" fill-opacity="0.55"/><rect x="1906.4" y="276.3" width="3.9" height="1.8" fill="#6a9955" fill-opacity="0.55"/><rect x="1911.6" y="276.3" width="7.8" height="1.8" fill="#6a9955" fill-opacity="0.55"/><rect x="1920.7" y="276.3" width="2.6" height="1.8" fill="#6a9955" fill-opacity="0.55"/><rect x="1924.6" y="276.3" width="3.9" height="1.8" fill="#6a9955" fill-opacity="0.55"/><rect x="1929.8" y="276.3" width="6.5" height="1.8" fill="#6a9955" fill-opacity="0.55"/><rect x="1833.6" y="278.9" width="11.7" height="1.8" fill="#9cdcfe"/><rect x="1845.3" y="278.9" width="1.3" height="1.8" fill="#d4d4d4"/><rect x="1846.6" y="278.9" width="13.0" height="1.8" fill="#dcdcaa"/><rect x="1859.6" y="278.9" width="1.3" height="1.8" fill="#da70d6"/><rect x="1860.9" y="278.9" width="3.9" height="1.8" fill="#b5cea8"/><rect x="1864.8" y="278.9" width="1.3" height="1.8" fill="#d4d4d4"/><rect x="1867.4" y="278.9" width="9.1" height="1.8" fill="#9cdcfe"/><rect x="1876.5" y="278.9" width="1.3" height="1.8" fill="#da70d6"/><rect x="1877.8" y="278.9" width="1.3" height="1.8" fill="#d4d4d4"/><rect x="1833.6" y="281.5" width="10.4" height="1.8" fill="#9cdcfe"/><rect x="1844.0" y="281.5" width="1.3" height="1.8" fill="#d4d4d4"/><rect x="1845.3" y="281.5" width="13.0" height="1.8" fill="#dcdcaa"/><rect x="1858.3" y="281.5" width="1.3" height="1.8" fill="#da70d6"/><rect x="1859.6" y="281.5" width="3.9" height="1.8" fill="#b5cea8"/><rect x="1863.5" y="281.5" width="1.3" height="1.8" fill="#d4d4d4"/><rect x="1866.1" y="281.5" width="9.1" height="1.8" fill="#9cdcfe"/><rect x="1875.2" y="281.5" width="1.3" height="1.8" fill="#da70d6"/><rect x="1876.5" y="281.5" width="1.3" height="1.8" fill="#d4d4d4"/><rect x="1833.6" y="286.7" width="2.6" height="1.8" fill="#6a9955" fill-opacity="0.55"/><rect x="1837.5" y="286.7" width="6.5" height="1.8" fill="#6a9955" fill-opacity="0.55"/><rect x="1845.3" y="286.7" width="3.9" height="1.8" fill="#6a9955" fill-opacity="0.55"/><rect x="1850.5" y="286.7" width="5.2" height="1.8" fill="#6a9955" fill-opacity="0.55"/><rect x="1857.0" y="286.7" width="2.6" height="1.8" fill="#6a9955" fill-opacity="0.55"/><rect x="1860.9" y="286.7" width="2.6" height="1.8" fill="#6a9955" fill-opacity="0.55"/><rect x="1864.8" y="286.7" width="7.8" height="1.8" fill="#6a9955" fill-opacity="0.55"/><rect x="1833.6" y="289.3" width="11.7" height="1.8" fill="#9cdcfe"/><rect x="1845.3" y="289.3" width="1.3" height="1.8" fill="#d4d4d4"/><rect x="1846.6" y="289.3" width="9.1" height="1.8" fill="#dcdcaa"/><rect x="1855.7" y="289.3" width="1.3" height="1.8" fill="#da70d6"/><rect x="1857.0" y="289.3" width="9.1" height="1.8" fill="#9cdcfe"/><rect x="1866.1" y="289.3" width="1.3" height="1.8" fill="#d4d4d4"/><rect x="1868.7" y="289.3" width="5.2" height="1.8" fill="#b5cea8"/><rect x="1873.9" y="289.3" width="1.3" height="1.8" fill="#d4d4d4"/><rect x="1876.5" y="289.3" width="9.1" height="1.8" fill="#9cdcfe"/><rect x="1885.6" y="289.3" width="1.3" height="1.8" fill="#d4d4d4"/><rect x="1888.2" y="289.3" width="5.2" height="1.8" fill="#569cd6"/><rect x="1893.4" y="289.3" width="1.3" height="1.8" fill="#da70d6"/><rect x="1894.7" y="289.3" width="1.3" height="1.8" fill="#d4d4d4"/><rect x="1833.6" y="291.9" width="5.2" height="1.8" fill="#dcdcaa"/><rect x="1838.8" y="291.9" width="1.3" height="1.8" fill="#da70d6"/><rect x="1840.1" y="291.9" width="3.9" height="1.8" fill="#b5cea8"/><rect x="1844.0" y="291.9" width="1.3" height="1.8" fill="#d4d4d4"/><rect x="1846.6" y="291.9" width="9.1" height="1.8" fill="#9cdcfe"/><rect x="1855.7" y="291.9" width="1.3" height="1.8" fill="#da70d6"/><rect x="1857.0" y="291.9" width="1.3" height="1.8" fill="#d4d4d4"/><rect x="1833.6" y="297.1" width="2.6" height="1.8" fill="#6a9955" fill-opacity="0.55"/><rect x="1837.5" y="297.1" width="6.5" height="1.8" fill="#6a9955" fill-opacity="0.55"/><rect x="1845.3" y="297.1" width="3.9" height="1.8" fill="#6a9955" fill-opacity="0.55"/><rect x="1850.5" y="297.1" width="3.9" height="1.8" fill="#6a9955" fill-opacity="0.55"/><rect x="1833.6" y="299.7" width="10.4" height="1.8" fill="#9cdcfe"/><rect x="1844.0" y="299.7" width="1.3" height="1.8" fill="#d4d4d4"/><rect x="1845.3" y="299.7" width="9.1" height="1.8" fill="#dcdcaa"/><rect x="1854.4" y="299.7" width="1.3" height="1.8" fill="#da70d6"/><rect x="1855.7" y="299.7" width="9.1" height="1.8" fill="#9cdcfe"/><rect x="1864.8" y="299.7" width="1.3" height="1.8" fill="#d4d4d4"/><rect x="1867.4" y="299.7" width="3.9" height="1.8" fill="#b5cea8"/><rect x="1871.3" y="299.7" width="1.3" height="1.8" fill="#d4d4d4"/><rect x="1873.9" y="299.7" width="6.5" height="1.8" fill="#9cdcfe"/><rect x="1880.4" y="299.7" width="1.3" height="1.8" fill="#d4d4d4"/><rect x="1883.0" y="299.7" width="5.2" height="1.8" fill="#569cd6"/><rect x="1888.2" y="299.7" width="1.3" height="1.8" fill="#da70d6"/><rect x="1889.5" y="299.7" width="1.3" height="1.8" fill="#d4d4d4"/><rect x="1833.6" y="304.9" width="2.6" height="1.8" fill="#6a9955" fill-opacity="0.55"/><rect x="1837.5" y="304.9" width="6.5" height="1.8" fill="#6a9955" fill-opacity="0.55"/><rect x="1845.3" y="304.9" width="9.1" height="1.8" fill="#6a9955" fill-opacity="0.55"/><rect x="1833.6" y="307.5" width="13.0" height="1.8" fill="#9cdcfe"/><rect x="1846.6" y="307.5" width="1.3" height="1.8" fill="#d4d4d4"/><rect x="1847.9" y="307.5" width="10.4" height="1.8" fill="#dcdcaa"/><rect x="1858.3" y="307.5" width="1.3" height="1.8" fill="#da70d6"/><rect x="1859.6" y="307.5" width="9.1" height="1.8" fill="#9cdcfe"/><rect x="1868.7" y="307.5" width="1.3" height="1.8" fill="#d4d4d4"/><rect x="1871.3" y="307.5" width="5.2" height="1.8" fill="#b5cea8"/><rect x="1876.5" y="307.5" width="1.3" height="1.8" fill="#d4d4d4"/><rect x="1879.1" y="307.5" width="7.8" height="1.8" fill="#9cdcfe"/><rect x="1886.9" y="307.5" width="1.3" height="1.8" fill="#d4d4d4"/><rect x="1889.5" y="307.5" width="5.2" height="1.8" fill="#569cd6"/><rect x="1894.7" y="307.5" width="1.3" height="1.8" fill="#da70d6"/><rect x="1896.0" y="307.5" width="1.3" height="1.8" fill="#d4d4d4"/><rect x="1833.6" y="312.7" width="2.6" height="1.8" fill="#6a9955" fill-opacity="0.55"/><rect x="1837.5" y="312.7" width="6.5" height="1.8" fill="#6a9955" fill-opacity="0.55"/><rect x="1845.3" y="312.7" width="3.9" height="1.8" fill="#6a9955" fill-opacity="0.55"/><rect x="1850.5" y="312.7" width="3.9" height="1.8" fill="#6a9955" fill-opacity="0.55"/><rect x="1833.6" y="315.3" width="10.4" height="1.8" fill="#9cdcfe"/><rect x="1844.0" y="315.3" width="1.3" height="1.8" fill="#d4d4d4"/><rect x="1845.3" y="315.3" width="9.1" height="1.8" fill="#dcdcaa"/><rect x="1854.4" y="315.3" width="1.3" height="1.8" fill="#da70d6"/><rect x="1855.7" y="315.3" width="9.1" height="1.8" fill="#9cdcfe"/><rect x="1864.8" y="315.3" width="1.3" height="1.8" fill="#d4d4d4"/><rect x="1867.4" y="315.3" width="3.9" height="1.8" fill="#b5cea8"/><rect x="1871.3" y="315.3" width="1.3" height="1.8" fill="#d4d4d4"/><rect x="1873.9" y="315.3" width="6.5" height="1.8" fill="#9cdcfe"/><rect x="1880.4" y="315.3" width="1.3" height="1.8" fill="#d4d4d4"/><rect x="1883.0" y="315.3" width="5.2" height="1.8" fill="#569cd6"/><rect x="1888.2" y="315.3" width="1.3" height="1.8" fill="#da70d6"/><rect x="1889.5" y="315.3" width="1.3" height="1.8" fill="#d4d4d4"/><rect x="1833.6" y="320.5" width="2.6" height="1.8" fill="#6a9955" fill-opacity="0.55"/><rect x="1837.5" y="320.5" width="5.2" height="1.8" fill="#6a9955" fill-opacity="0.55"/><rect x="1844.0" y="320.5" width="3.9" height="1.8" fill="#6a9955" fill-opacity="0.55"/><rect x="1849.2" y="320.5" width="5.2" height="1.8" fill="#6a9955" fill-opacity="0.55"/><rect x="1833.6" y="323.1" width="11.7" height="1.8" fill="#9cdcfe"/><rect x="1845.3" y="323.1" width="1.3" height="1.8" fill="#d4d4d4"/><rect x="1846.6" y="323.1" width="9.1" height="1.8" fill="#dcdcaa"/><rect x="1855.7" y="323.1" width="1.3" height="1.8" fill="#da70d6"/><rect x="1857.0" y="323.1" width="9.1" height="1.8" fill="#9cdcfe"/><rect x="1866.1" y="323.1" width="1.3" height="1.8" fill="#d4d4d4"/><rect x="1868.7" y="323.1" width="5.2" height="1.8" fill="#b5cea8"/><rect x="1873.9" y="323.1" width="1.3" height="1.8" fill="#d4d4d4"/><rect x="1876.5" y="323.1" width="9.1" height="1.8" fill="#9cdcfe"/><rect x="1885.6" y="323.1" width="1.3" height="1.8" fill="#d4d4d4"/><rect x="1888.2" y="323.1" width="5.2" height="1.8" fill="#569cd6"/><rect x="1893.4" y="323.1" width="1.3" height="1.8" fill="#da70d6"/><rect x="1894.7" y="323.1" width="1.3" height="1.8" fill="#d4d4d4"/><rect x="1833.6" y="328.3" width="2.6" height="1.8" fill="#6a9955" fill-opacity="0.55"/><rect x="1837.5" y="328.3" width="5.2" height="1.8" fill="#6a9955" fill-opacity="0.55"/><rect x="1844.0" y="328.3" width="3.9" height="1.8" fill="#6a9955" fill-opacity="0.55"/><rect x="1849.2" y="328.3" width="6.5" height="1.8" fill="#6a9955" fill-opacity="0.55"/><rect x="1857.0" y="328.3" width="5.2" height="1.8" fill="#6a9955" fill-opacity="0.55"/><rect x="1863.5" y="328.3" width="2.6" height="1.8" fill="#6a9955" fill-opacity="0.55"/><rect x="1867.4" y="328.3" width="3.9" height="1.8" fill="#6a9955" fill-opacity="0.55"/><rect x="1872.6" y="328.3" width="10.4" height="1.8" fill="#6a9955" fill-opacity="0.55"/><rect x="1884.3" y="328.3" width="10.4" height="1.8" fill="#6a9955" fill-opacity="0.55"/><rect x="1896.0" y="328.3" width="6.5" height="1.8" fill="#6a9955" fill-opacity="0.55"/><rect x="1833.6" y="330.9" width="5.2" height="1.8" fill="#dcdcaa"/><rect x="1838.8" y="330.9" width="1.3" height="1.8" fill="#da70d6"/><rect x="1840.1" y="330.9" width="3.9" height="1.8" fill="#b5cea8"/><rect x="1844.0" y="330.9" width="1.3" height="1.8" fill="#d4d4d4"/><rect x="1846.6" y="330.9" width="9.1" height="1.8" fill="#9cdcfe"/><rect x="1855.7" y="330.9" width="1.3" height="1.8" fill="#da70d6"/><rect x="1857.0" y="330.9" width="1.3" height="1.8" fill="#d4d4d4"/><rect x="1833.6" y="333.5" width="13.0" height="1.8" fill="#9cdcfe"/><rect x="1846.6" y="333.5" width="1.3" height="1.8" fill="#d4d4d4"/><rect x="1847.9" y="333.5" width="10.4" height="1.8" fill="#dcdcaa"/><rect x="1858.3" y="333.5" width="1.3" height="1.8" fill="#da70d6"/><rect x="1859.6" y="333.5" width="9.1" height="1.8" fill="#9cdcfe"/><rect x="1868.7" y="333.5" width="1.3" height="1.8" fill="#d4d4d4"/><rect x="1871.3" y="333.5" width="5.2" height="1.8" fill="#b5cea8"/><rect x="1876.5" y="333.5" width="1.3" height="1.8" fill="#d4d4d4"/><rect x="1879.1" y="333.5" width="7.8" height="1.8" fill="#9cdcfe"/><rect x="1886.9" y="333.5" width="1.3" height="1.8" fill="#d4d4d4"/><rect x="1889.5" y="333.5" width="5.2" height="1.8" fill="#569cd6"/><rect x="1894.7" y="333.5" width="1.3" height="1.8" fill="#da70d6"/><rect x="1896.0" y="333.5" width="1.3" height="1.8" fill="#d4d4d4"/><rect x="1833.6" y="338.7" width="7.8" height="1.8" fill="#c586c0"/><rect x="1842.7" y="338.7" width="1.3" height="1.8" fill="#b5cea8"/><rect x="1844.0" y="338.7" width="1.3" height="1.8" fill="#d4d4d4"/><rect x="1831.0" y="341.3" width="1.3" height="1.8" fill="#ffd700"/></g></svg>
<div class="a" style="left:1982px;top:91px;width:17px;height:1070px;background:#1e1e1e;border-left:1px solid #2b2b2b;box-sizing:border-box;"></div>
<div class="a" style="left:1983px;top:119px;width:16px;height:358px;background:#474747;"></div>
<div class="a" style="left:1983px;top:246px;width:16px;height:2px;background:#a0a0a0;"></div>

<!-- ===== PANEL ===== -->
<div class="panel"></div>
<div class="ptab" style="left:434px;color:#e7e7e7;">TERMINAL</div>
<div class="a" style="left:431px;top:1200px;width:78px;height:2.5px;background:#e7e7e7;"></div>
<div class="ptab" style="left:538px;">PROBLEMS</div>
<div class="ptab" style="left:647px;">OUTPUT</div>
<div class="ptab" style="left:738px;">DEBUG CONSOLE</div>
<div class="ptab" style="left:892px;">JUPYTER</div>
<div class="tl" style="top:1211.00px">Log</div>
<div class="tl" style="top:1229.12px">unix build for platform vexiq2 on Darwin x86_64</div>
<div class="tl" style="top:1247.25px">make: Nothing to be done for `all'.</div>
<div class="tl" style="top:1265.38px"></div>
<div class="tl" style="top:1283.50px">Build Finished</div>
<div class="tl" style="top:1301.62px"></div>
<div class="tl" style="top:1319.75px">unix build for platform vexiq2 on Darwin x86_64</div>
<div class="tl" style="top:1337.88px">CXX src/main.cpp</div>
<div class="tl" style="top:1356.00px">LINK build/Clawbot.elf</div>
<div class="tl" style="top:1374.12px">   text    data     bss     dec     hex filenam</div>
<div class="tl" style="top:1392.25px">e</div>
<div class="tl" style="top:1410.38px">  12840     117    5008   17965    462d build/C</div>
<div class="tl" style="top:1428.50px">lawbot.elf</div>
<div class="tl" style="top:1446.62px"></div>
<div class="tl" style="top:1464.75px">Build Finished</div>
<div class="a" style="left:880px;top:1207px;width:1px;height:515px;background:#3c3c3c;"></div>
<div class="a" style="left:1351px;top:1206px;width:1px;height:516px;background:#3c3c3c;"></div>
<div class="a" style="left:1352px;top:1263px;width:647px;height:29px;background:#37373d;"></div>
<div class="row" style="left:1390px;top:1207px;font-size:17.4px;">bash</div>
<div class="row" style="left:1412px;top:1235.5px;font-size:17.4px;">Log</div>
<div class="row" style="left:1412px;top:1264px;font-size:17.4px;color:#e0e0e0;">Interactive Terminal</div>

<!-- ===== STATUS BAR ===== -->
<div class="status"></div>
<div class="a" style="left:0;top:1722px;width:43px;height:25px;background:#16825d;"></div>
<div class="a" style="left:0;top:1747px;width:1999px;height:1px;background:#101010;"></div>
<div class="st" style="left:76px;">0</div>
<div class="st" style="left:113px;">0</div>
<div class="st" style="left:175px;">Slot 1</div>
<div class="st" style="left:380px;">Clawbot</div>
<div class="st" style="left:1504px;">Ln 17, Col 44</div>
<div class="st" style="left:1620px;">Spaces: 2</div>
<div class="st" style="left:1713px;">UTF-8</div>
<div class="st" style="left:1781px;">LF</div>
<div class="st" style="left:1820px;">C++</div>
<div class="st" style="left:1872px;">Mac</div>

<svg class="a" style="left:0;top:0;" width="1999" height="1748" viewBox="0 0 1999 1748" fill="none" stroke-linecap="round" stroke-linejoin="round">
<!-- window corners -->
<path d="M0 0 H11 A11 11 0 0 0 0 11 Z" fill="#d9dade"/>
<path d="M1999 0 H1988 A11 11 0 0 1 1999 11 Z" fill="#d9dade"/>
<path d="M0 0.5 H1999" stroke="#9a9a9a" stroke-width="1"/>
<path d="M0 1748 V1743 A5 5 0 0 0 5 1748 Z" fill="#050505"/>
<path d="M1999 1748 V1743 A5 5 0 0 1 1994 1748 Z" fill="#050505"/>

<!-- title: nav arrows -->
<g stroke="#cccccc" stroke-width="1.6">
 <path d="M578 23 H594 M578 23 L584.5 16.5 M578 23 L584.5 29.5"/>
</g>
<g stroke="#7f7f7f" stroke-width="1.6">
 <path d="M622 23 H606 M622 23 L615.5 16.5 M622 23 L615.5 29.5"/>
</g>
<!-- search icon -->
<g stroke="#b8b8b8" stroke-width="1.3">
 <circle cx="989.2" cy="19.8" r="5.8"/>
 <path d="M985 24 L979 30.8"/>
</g>
<!-- search dropdown chevron -->
<path d="M1404 21 L1408.5 25.3 L1413 21" stroke="#8f8f8f" stroke-width="1.3"/>

<!-- layout icons top right -->
<g stroke="#c5c5c5" stroke-width="1.5">
 <rect x="1867" y="14.2" width="17" height="17" rx="2"/>
 <rect x="1896" y="14.2" width="17" height="17" rx="2"/>
 <rect x="1924.8" y="14.2" width="17" height="17" rx="2"/>
 <path d="M1934.5 14.5 V31"/>
 <path d="M1953 13 V32.5" stroke="#8a8a8a" stroke-width="1"/>
 <rect x="1966" y="15.5" width="6.6" height="14.5" rx="1.5"/>
 <rect x="1976.6" y="15.5" width="5.6" height="5.6" rx="1.3"/>
 <rect x="1976.6" y="24.4" width="5.6" height="5.6" rx="1.3"/>
</g>
<rect x="1867" y="14.2" width="7.5" height="17" rx="1.5" fill="#c5c5c5"/>
<rect x="1896" y="25" width="17" height="6.2" rx="1.5" fill="#c5c5c5"/>

<!-- ===== activity bar icons ===== -->
<g stroke="#ffffff" stroke-width="2">
 <path d="M36.8 62 H27.5 A3 3 0 0 0 24.5 65 V80.5 A3 3 0 0 0 27.5 83.5 H39 A3 3 0 0 0 42 80.5 V67.2 Z"/>
 <path d="M36.5 62 V67.5 H42"/>
 <path d="M24.5 70 H19.6 A3 3 0 0 0 16.6 73 V88.5 A3 3 0 0 0 19.6 91.5 H31 A3 3 0 0 0 34 88.5 V83.5"/>
</g>
<g stroke="#858585" stroke-width="1.9">
 <!-- search -->
 <circle cx="34.2" cy="134" r="9.4"/>
 <path d="M27.5 141 L17 153"/>
 <!-- source control -->
 <circle cx="23" cy="190.5" r="4.3"/>
 <circle cx="36.5" cy="196.5" r="4.3"/>
 <circle cx="23" cy="212.5" r="4.3"/>
 <path d="M23 195 V208"/>
 <path d="M23.5 207 Q25 204 29 204 H31.5 Q35 204 36.3 201"/>
 <!-- run & debug -->
 <path d="M25 262 V249.5 L44 261 L32.5 269"/>
 <ellipse cx="22" cy="273.5" rx="4.3" ry="5"/>
 <path d="M18 271.5 H26 M14.5 273 H17.5 M26.5 273 H29.5 M15 266.5 L18 268.5 M29 266.5 L26 268.5 M15 279.5 L18 277.5 M29 279.5 L26 277.5 M20 268 Q22 265.5 24 268"/>
 <!-- extensions -->
 <path d="M16.5 329 V318.5 Q16.5 316.8 18.2 316.8 H25.5 Q27.2 316.8 27.2 318.5 V329 H38 Q39.5 329 39.5 330.5 V338.5 Q39.5 340 38 340 H18.2 Q16.5 340 16.5 338.3 V329 H27.2 V340"/>
 <rect x="32.5" y="310.5" width="12.3" height="12.3" rx="1.8"/>
 <!-- remote explorer -->
 <path d="M27 397.5 H17.5 Q15.8 397.5 15.8 395.8 V378.3 Q15.8 376.6 17.5 376.6 H41 Q42.7 376.6 42.7 378.3 V385.5"/>
 <path d="M21.5 401.2 H28"/>
 <circle cx="37.2" cy="396" r="7.6"/>
</g>
<g stroke="#858585" stroke-width="1.3">
 <path d="M34 393.5 L36.5 396 L34 398.5 M40.5 391.5 L38 394 L40.5 396.5"/>
</g>
<!-- VEX logo -->
<g stroke="#7c7c7c" stroke-width="1.3" stroke-linecap="butt" stroke-linejoin="miter">
 <path d="M16.2 448.4 L21 453.4 L25.2 448.4"/>
 <path d="M32.8 445.2 H27.6 V451.2 H32.8 M27.6 448.2 H32.6"/>
 <path d="M34.6 448.4 L43.4 453.6 M43.4 448.4 L34.6 453.6"/>
</g>
<path d="M16 456.7 H43.5" stroke="#4a4a4a" stroke-width="1.1" stroke-dasharray="1.5 2.2"/>
<!-- account -->
<g stroke="#858585" stroke-width="1.9">
 <circle cx="29.8" cy="1628" r="14.8"/>
 <circle cx="29.8" cy="1625" r="6.3"/>
 <path d="M20.3 1639.5 Q22.5 1631.8 29.8 1631.8 Q37.1 1631.8 39.3 1639.5"/>
</g>
<!-- gear -->
<g stroke="#858585" stroke-width="1.9">
 <path id="gear" transform="translate(29.8 1690.5) scale(1.2) translate(-29.8 -1688.6)" d="M27.3 1676.5 H32.3 L33.2 1680.5 L36.6 1678.3 L40.1 1681.8 L37.9 1685.2 L41.9 1686.1 V1691.1 L37.9 1692 L40.1 1695.4 L36.6 1698.9 L33.2 1696.7 L32.3 1700.7 H27.3 L26.4 1696.7 L23 1698.9 L19.5 1695.4 L21.7 1692 L17.7 1691.1 V1686.1 L21.7 1685.2 L19.5 1681.8 L23 1678.3 L26.4 1680.5 Z"/>
 <circle cx="29.8" cy="1690.5" r="3.2"/>
</g>

<!-- ===== sidebar icons ===== -->
<circle cx="378.2" cy="68" r="1.35" fill="#c5c5c5"/><circle cx="371.6" cy="68" r="1.35" fill="#c5c5c5"/><circle cx="384.8" cy="68" r="1.35" fill="#c5c5c5"/>
<g stroke="#c5c5c5" stroke-width="1.4">
 <path d="M68.5 101 L75 107.5 L81.5 101"/>
 <path d="M68.5 159 L75 165.5 L81.5 159"/>
 <path d="M98.5 129 L108 138.5 M108 129 L98.5 138.5"/>
 <path d="M88.5 184.5 L95 191 L88.5 197.5"/>
 <path d="M88.5 213 L95 219.5 L88.5 226"/>
 <path d="M84.8 245 L91 251.3 L97.2 245"/>
 <path d="M84.8 302.5 L91 308.8 L97.2 302.5"/>
 <path d="M88.5 356 L95 362.5 L88.5 369"/>
 <path d="M71 1673.5 L77.5 1680 L71 1686.5"/>
 <path d="M71 1701.5 L77.5 1708 L71 1714.5"/>
</g>
<!-- C++ icons -->
<g id="cpp">
 <path d="M130.4 129.3 A4.8 4.8 0 1 0 130.4 137.5" stroke="#519aba" stroke-width="3.4" stroke-linecap="butt"/>
 <path d="M128.1 133.2 H131.2 M129.65 131.65 V134.75 M132 133.2 H136.8 M134.4 130.8 V135.6" stroke="#519aba" stroke-width="1.4" stroke-linecap="butt"/>
</g>
<use href="#cpp" x="-28.5" y="200.5"/>
<use href="#cpp" x="305.3" y="-66"/>
<use href="#cpp" x="358" y="-29"/>
<!-- C (vex.h) -->
<path d="M103.6 272.8 A5.2 5.8 0 1 0 103.6 281" stroke="#a074c4" stroke-width="3" stroke-linecap="butt"/>
<!-- M (makefile) -->
<path d="M83.3 397 V384.5 L89.5 393 L95.7 384.5 V397" stroke="#e37933" stroke-width="3" stroke-linejoin="miter" stroke-linecap="butt"/>

<!-- ===== editor tab & actions ===== -->
<path d="M539.5 63 L549.5 73 M549.5 63 L539.5 73" stroke="#ffffff" stroke-width="1.5"/>
<g stroke="#a9a9a9" stroke-width="1.3">
 <path d="M461 100 L467 106 L461 112"/>
 <path d="M582 100 L588 106 L582 112"/>
</g>
<g stroke="#c5c5c5" stroke-width="1.5">
 <path d="M1849 66 V58.3 L1862 66.5 L1853.8 72.2"/>
 <ellipse cx="1846.8" cy="74" rx="3.4" ry="4"/>
 <path d="M1843.6 71.5 H1850" stroke-width="1.2"/>
 <path d="M1841 74.2 H1843.2 M1850.4 74.2 H1852.6 M1841.6 69.8 L1843.6 71.2 M1852 69.8 L1850 71.2 M1841.6 78.6 L1843.6 77.2 M1852 78.6 L1850 77.2" stroke-width="1.2"/>
 <path d="M1868.5 66 L1873 70.5 L1877.5 66" stroke-width="1.2"/>
 <path d="M1928.9 60 Q1928.9 58.7 1930.2 58.7 H1944.5 Q1945.8 58.7 1945.8 60 V74.5 Q1945.8 75.8 1944.5 75.8 H1930.2 Q1928.9 75.8 1928.9 74.5 Z M1937.3 58.7 V75.8"/>
 <circle cx="1902.7" cy="68" r="2"/>
</g>
<path d="M1901.35 61.77 L1901.39 59.32 L1904.21 59.32 L1904.25 61.77 L1906.04 62.51 L1907.80 60.80 L1909.80 62.80 L1908.09 64.56 L1908.83 66.35 L1911.28 66.39 L1911.28 69.21 L1908.83 69.25 L1908.09 71.04 L1909.80 72.80 L1907.80 74.80 L1906.04 73.09 L1904.25 73.83 L1904.21 76.28 L1901.39 76.28 L1901.35 73.83 L1899.56 73.09 L1897.80 74.80 L1895.80 72.80 L1897.51 71.04 L1896.77 69.25 L1894.32 69.21 L1894.32 66.39 L1896.77 66.35 L1897.51 64.56 L1895.80 62.80 L1897.80 60.80 L1899.56 62.51 Z" stroke="#c5c5c5" stroke-width="1.4"/>
<circle cx="1964" cy="68" r="1.4" fill="#c5c5c5"/><circle cx="1970.5" cy="68" r="1.4" fill="#c5c5c5"/><circle cx="1977" cy="68" r="1.4" fill="#c5c5c5"/>

<!-- indent guides -->
<path d="M494.5 891 V1161" stroke="#404040" stroke-width="1"/>
<path d="M513.5 1031 V1054.5" stroke="#404040" stroke-width="1"/>

<!-- ===== panel icons ===== -->
<g stroke="#c5c5c5" stroke-width="1.5">
 <path d="M1887.5 1184 H1904.5 M1896 1175.5 V1192.5"/>
 <path d="M1913 1182.5 L1917.5 1187 L1922 1182.5" stroke-width="1.2"/>
 <path d="M1941 1188.5 L1947.5 1181 L1954 1188.5"/>
 <path d="M1970.5 1179.5 L1981.5 1190 M1981.5 1179.5 L1970.5 1190"/>
</g>
<rect x="907.5" y="1211" width="9" height="16" stroke="#cccccc" stroke-width="1.3"/>
<g stroke="#c5c5c5" stroke-width="1.2">
 <rect x="1366" y="1211.5" width="17.5" height="17" rx="1"/>
 <path d="M1372.5 1215.5 L1377 1220 L1372.5 1224.5"/>
 <rect x="1388" y="1240.3" width="17.5" height="17" rx="1"/>
 <path d="M1394.5 1244.3 L1399 1248.8 L1394.5 1253.3"/>
 <rect x="1388" y="1268.8" width="17.5" height="17" rx="1"/>
 <path d="M1394.5 1272.8 L1399 1277.3 L1394.5 1281.8"/>
 <path d="M1372 1259 V1249 H1381" stroke-width="1.8" stroke-linecap="butt" stroke-linejoin="miter"/>
 <path d="M1372 1270.5 V1277.5 H1381" stroke-width="1.8" stroke-linecap="butt" stroke-linejoin="miter"/>
</g>

<!-- ===== status bar icons ===== -->
<g stroke="#ffffff" stroke-width="1.5">
 <path d="M15 1733.8 L20.7 1738.2 L15.6 1742.8 M26.1 1729 L21.3 1734 L26.1 1738.6"/>
 <circle cx="62" cy="1736.8" r="7.2"/>
 <path d="M58.8 1733.6 L65.2 1740 M65.2 1733.6 L58.8 1740"/>
 <path d="M99.3 1729.5 L106.3 1743.5 H92.3 Z"/>
 <path d="M99.3 1734 V1739 M99.3 1741 V1741.3"/>
 <rect x="151" y="1728.5" width="14" height="13" rx="1"/>
 </g><path d="M250.8 1728.6000000000001 L254.78 1730.90 L254.78 1735.50 L250.8 1737.8 L246.82 1735.50 L246.82 1730.90 Z" fill="#ffffff" stroke="#ffffff" stroke-width="1"/><path d="M246.82 1730.90 L250.8 1733.2 L254.78 1730.90 M250.8 1733.2 V1737.8" stroke="#007acc" stroke-width="1.1"/><path d="M245.2 1734.7 L249.18 1737.00 L249.18 1741.60 L245.2 1743.8999999999999 L241.22 1741.60 L241.22 1737.00 Z" fill="#ffffff" stroke="#ffffff" stroke-width="1"/><path d="M241.22 1737.00 L245.2 1739.3 L249.18 1737.00 M245.2 1739.3 V1743.8999999999999" stroke="#007acc" stroke-width="1.1"/><path d="M254.3 1734.2 L258.28 1736.50 L258.28 1741.10 L254.3 1743.3999999999999 L250.32 1741.10 L250.32 1736.50 Z" fill="#ffffff" stroke="#ffffff" stroke-width="1"/><path d="M250.32 1736.50 L254.3 1738.8 L258.28 1736.50 M254.3 1738.8 V1743.3999999999999" stroke="#007acc" stroke-width="1.1"/><g stroke="#ffffff" stroke-width="1.5">
</g>
<rect x="147.5" y="1732" width="14" height="13" rx="1" fill="#ffffff"/>
<path d="M291.5 1729 L304.5 1736.5 L291.5 1744 Z" fill="#ffffff"/>
<rect x="338.5" y="1730" width="14" height="14" rx="1" fill="#ffffff"/>
<g stroke="#ffffff" stroke-width="1.4">
 <circle cx="1931" cy="1733" r="3.5"/>
 <path d="M1925 1744.5 Q1926 1738.5 1931 1738.5 Q1936 1738.5 1937 1744.5"/>
 <path d="M1930 1728.5 H1941.5 V1737 H1937.5"/>
</g>
<g stroke="#ffffff" stroke-width="1.5">
 <path d="M1971.5 1729.2 Q1966.3 1729.5 1966 1735 V1741 H1977.3 L1977 1737.5"/>
 <path d="M1970 1742.5 Q1971.5 1745 1973 1742.5"/>
</g>
<circle cx="1976.5" cy="1731.6" r="3" fill="#ffffff"/>
</svg>


</body></html>
